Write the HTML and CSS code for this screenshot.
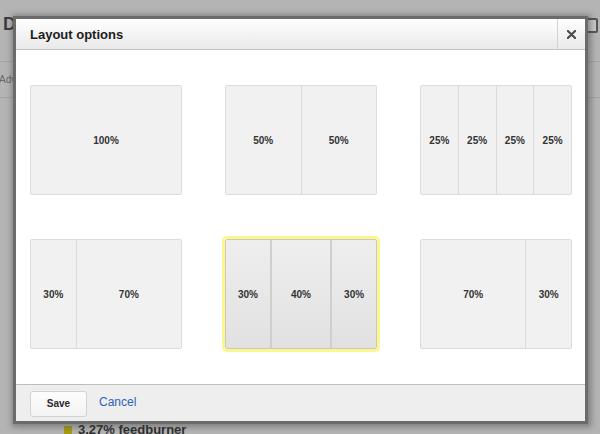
FILE: index.html
```html
<!DOCTYPE html>
<html>
<head>
<meta charset="utf-8">
<link rel="stylesheet" href="styles.css">
</head>
<body>
<div class="page">
  <div class="pg-top">
    <span class="pg-title">D</span>
    <span class="pg-icon"></span>
  </div>
  <div class="pg-tabs">Adv</div>
  <div class="pg-legend"><span class="pg-swatch"></span>3.27% feedburner</div>
</div>

<div class="dialog">
  <div class="dlg-head">
    <div class="dlg-title">Layout options</div>
    <button class="dlg-close" aria-label="Close">
      <svg width="9" height="9" viewBox="0 0 10 10"><path d="M1 1L9 9M9 1L1 9" stroke="#4a4a4a" stroke-width="2.4" stroke-linecap="round"/></svg>
    </button>
  </div>
  <div class="dlg-body">
    <div class="opt"><div class="col" style="flex:100">100%</div></div>
    <div class="opt"><div class="col" style="flex:50">50%</div><div class="col" style="flex:50">50%</div></div>
    <div class="opt"><div class="col" style="flex:25">25%</div><div class="col" style="flex:25">25%</div><div class="col" style="flex:25">25%</div><div class="col" style="flex:25">25%</div></div>
    <div class="opt"><div class="col" style="flex:30">30%</div><div class="col" style="flex:70">70%</div></div>
    <div class="opt selected"><div class="col" style="flex:30">30%</div><div class="col" style="flex:40">40%</div><div class="col" style="flex:30">30%</div></div>
    <div class="opt"><div class="col" style="flex:70">70%</div><div class="col" style="flex:30">30%</div></div>
  </div>
  <div class="dlg-foot">
    <button class="btn">Save</button>
    <a class="link" href="#">Cancel</a>
  </div>
</div>
</body>
</html>
```
FILE: styles.css
```css
html, body {
  margin: 0;
  padding: 0;
}
body {
  width: 600px;
  height: 434px;
  overflow: hidden;
  background: #b0b0b0;
  font-family: "Liberation Sans", Arial, sans-serif;
  position: relative;
}
.page {
  height: 434px;
  display: flex;
  flex-direction: column;
  background: #b4b4b4;
}
.pg-top {
  height: 62px;
  border-bottom: 1px solid #a4a4a4;
  display: flex;
  justify-content: space-between;
  align-items: flex-start;
  padding: 15px 2px 0 3px;
  box-sizing: border-box;
}
.pg-title {
  font-size: 18px;
  font-weight: bold;
  color: #3c3c3c;
  line-height: 18px;
}
.pg-icon {
  width: 8px;
  height: 11px;
  border: 2px solid #555;
  border-radius: 2px;
  margin-top: 3px;
  background: #c8c8c8;
}
.pg-tabs {
  height: 35px;
  border-bottom: 1px solid #a4a4a4;
  font-size: 10px;
  color: #666;
  line-height: 35px;
  margin-left: -1px;
}
.pg-legend {
  margin-top: auto;
  margin-bottom: -3px;
  padding-left: 64px;
  display: flex;
  align-items: center;
  font-size: 13px;
  font-weight: bold;
  color: #2e2e2e;
  line-height: 15px;
  height: 15px;
}
.pg-swatch {
  width: 8px;
  height: 8px;
  background: #a59b14;
  margin-right: 6px;
}

.dialog {
  position: absolute;
  left: 16px;
  top: 19px;
  width: 569px;
  height: 402px;
  background: #fff;
  box-shadow: 0 0 0 3px #6b6b6b, 1px 1px 6px 5px rgba(60, 60, 60, 0.45);
  display: flex;
  flex-direction: column;
}
.dlg-head {
  height: 30px;
  border-bottom: 1px solid #c4c4c4;
  background: linear-gradient(#ffffff, #e9e9e9);
  display: flex;
  align-items: stretch;
}
.dlg-title {
  flex: 1;
  padding-left: 14px;
  font-size: 13px;
  font-weight: bold;
  color: #1c1c1c;
  line-height: 31px;
}
.dlg-close {
  width: 28px;
  border: 0;
  border-left: 1px solid #d3d3d3;
  background: transparent;
  padding: 0;
  display: flex;
  align-items: center;
  justify-content: center;
}
.dlg-body {
  height: 334px;
  box-sizing: border-box;
  padding: 35px 13px 0 14px;
  display: grid;
  grid-template-columns: 152px 152px 152px;
  grid-template-rows: 110px 110px;
  justify-content: space-between;
  row-gap: 44px;
}
.opt {
  display: flex;
  border: 1px solid #dcdcdc;
  border-radius: 2px;
  background: #f1f1f1;
}
.col {
  display: flex;
  align-items: center;
  justify-content: center;
  font-size: 10px;
  font-weight: bold;
  color: #333;
  border-left: 1px solid #dcdcdc;
}
.col:first-child {
  border-left: 0;
}
.opt.selected {
  background: linear-gradient(#eeeeee, #e1e1e1);
  border-color: #c9c9c9;
  outline: 3px solid #fbf78c;
}
.opt.selected .col {
  border-left-color: #cfcfcf;
  border-left-width: 2px;
}
.opt.selected .col:first-child {
  border-left: 0;
}
.dlg-foot {
  flex: 1;
  border-top: 1px solid #bdbdbd;
  background: #eeeeee;
  display: flex;
  align-items: center;
  padding-left: 14px;
}
.btn {
  width: 57px;
  height: 26px;
  border: 1px solid #d2d2d2;
  border-radius: 3px;
  background: linear-gradient(#fdfdfd, #f3f3f3);
  font-family: "Liberation Sans", Arial, sans-serif;
  font-size: 10px;
  font-weight: bold;
  color: #2a2a2a;
  padding: 0;
  margin-top: 1px;
}
.link {
  margin-left: 12px;
  font-size: 12px;
  color: #2b64b8;
  text-decoration: none;
  margin-top: -2px;
}
```
